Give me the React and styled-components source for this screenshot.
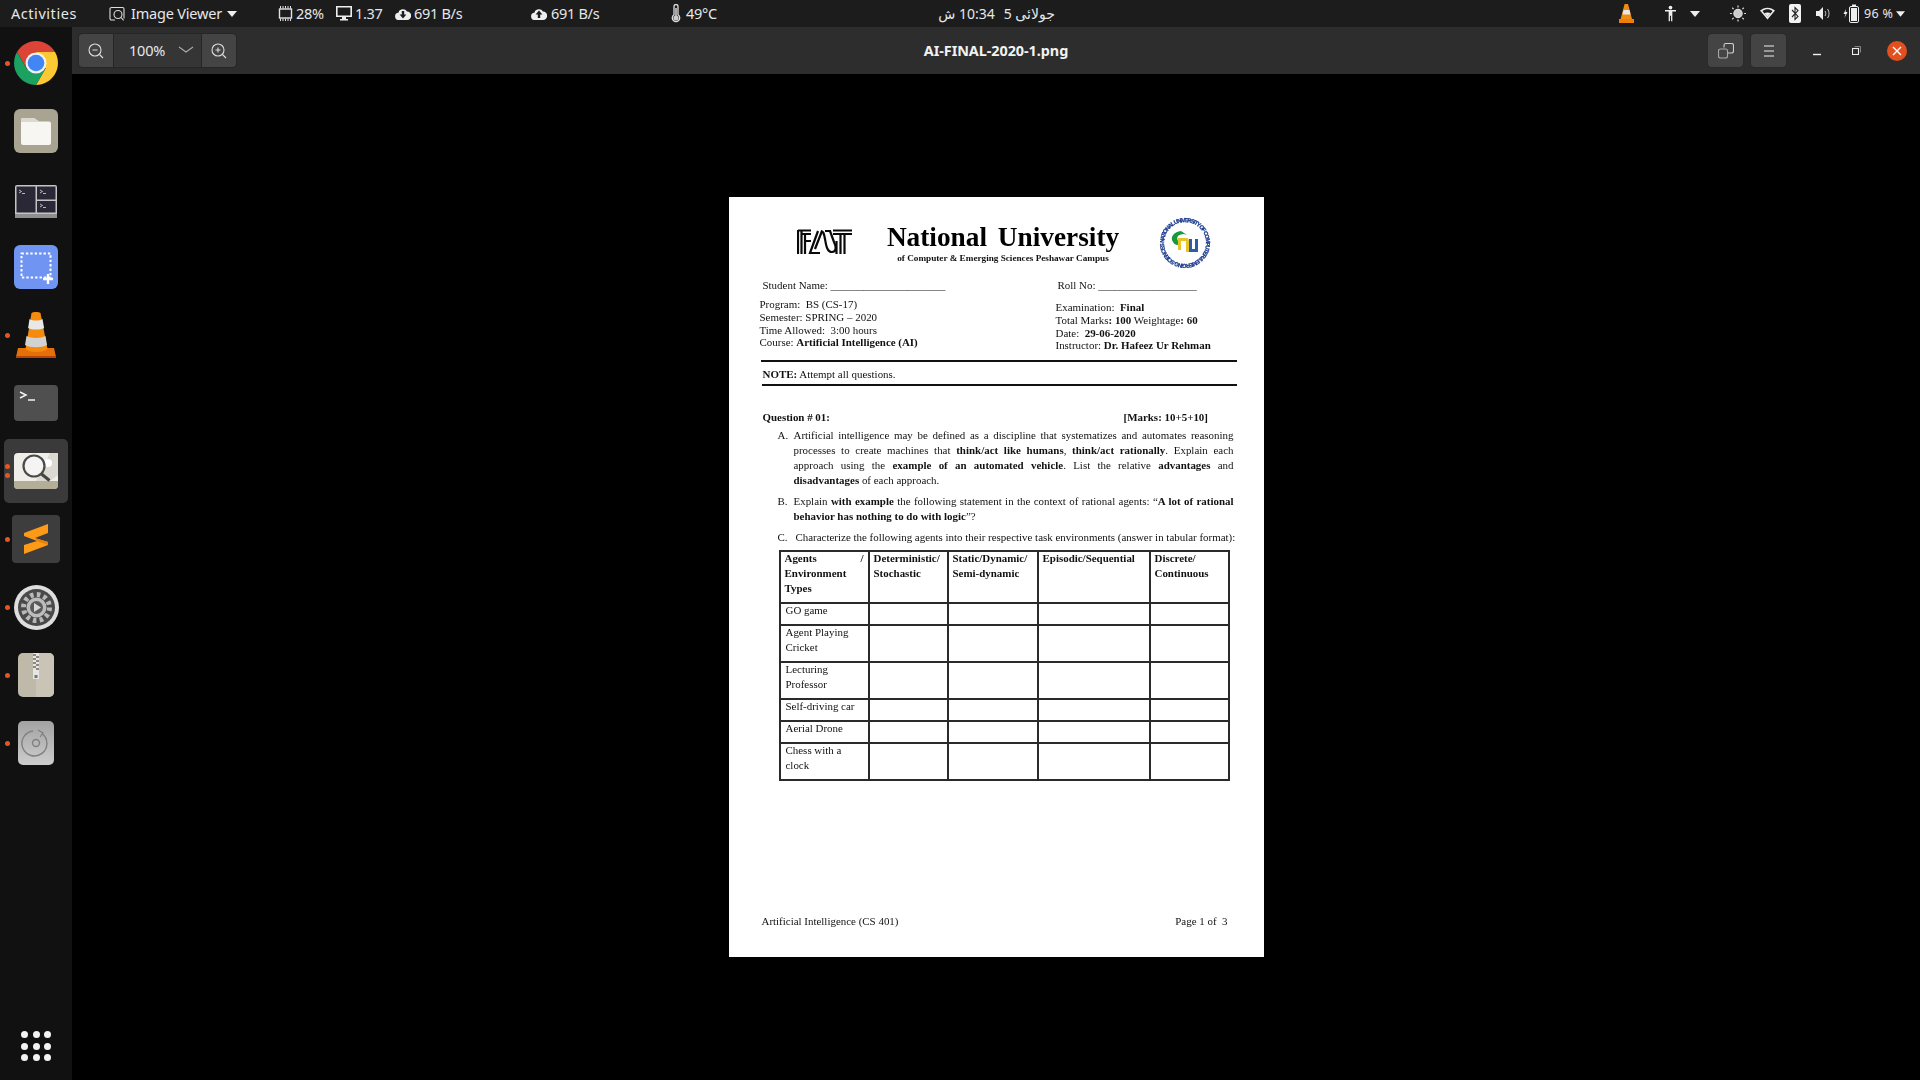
import React from "react";
import styled, { createGlobalStyle } from "styled-components";

const Global = createGlobalStyle`
  html, body { margin: 0; padding: 0; background: #000; }
  #root { width: 1920px; height: 1080px; overflow: hidden; }
`;
const Screen = styled.div`
  width: 1920px; height: 1080px; display: flex; flex-direction: column; background: #000;
  font-family: "Noto Sans", sans-serif; color: #e6e6e6;
`;
const TopBar = styled.header`
  height: 27px; flex: none; display: flex; align-items: center; background: #1c1c1c; font-size: 14px;
`;
const Cell = styled.div`
  flex: none; width: ${p => p.$w}px; margin-left: ${p => p.$ml}px; display: flex; align-items: center; justify-content: center;
  white-space: nowrap; color: ${p => p.$c || "#e4e8ea"};
`;
const StatusText = styled(Cell)`justify-content: flex-start; letter-spacing: ${p => p.$ls ?? -0.3}px; font-size: ${p => p.$fs || 14.5}px; padding-bottom: 1px;`;
const Clock = styled(Cell)`direction: rtl; font-family: "Noto Sans", "DejaVu Sans", sans-serif; font-size: 14px; gap: 9px; padding-bottom: 1px;`;
const Body = styled.div`flex: 1; display: flex; min-height: 0;`;
const Dock = styled.nav`
  width: 72px; flex: none; background: #111112; display: flex; flex-direction: column; padding-top: 2px; box-sizing: border-box;
`;
const Slot = styled.div`
  height: 68px; flex: none; position: relative; display: flex; align-items: center; justify-content: center; box-sizing: border-box;
  padding-top: ${p => p.$pt || 0}px;
`;
const ActiveBox = styled.div`
  width: 64px; height: 64px; border-radius: 5px; background: #3a3a3a; display: flex; align-items: center; justify-content: center;
`;
const Dot = styled.span`
  position: absolute; left: 5px; top: ${p => p.$top}px; width: 5px; height: 5px; border-radius: 50%; background: #e95420;
`;
const AppsGrid = styled.div`
  margin-top: auto; margin-bottom: 19px; align-self: center; display: grid; grid-template-columns: repeat(3, 7px); gap: 4.5px;
  & > i { width: 7px; height: 7px; border-radius: 50%; background: #f4f4f4; display: block; }
`;
const Main = styled.main`flex: 1; display: flex; flex-direction: column; min-width: 0;`;
const Header = styled.div`
  height: 47px; flex: none; display: grid; grid-template-columns: 1fr auto 1fr; align-items: center; background: #2d2d2d;
`;
const ToolGroup = styled.div`
  display: flex; height: 33px; margin-left: 7px; width: 157px; border-radius: 4px; overflow: hidden; box-shadow: 0 0 0 1px #262626;
`;
const ToolBtn = styled.div`
  width: 34px; flex: none; background: #444; display: flex; align-items: center; justify-content: center;
`;
const ZoomBox = styled.div`
  flex: 1; background: #353535; display: flex; align-items: center; border-left: 1px solid #262626; border-right: 1px solid #262626;
  padding: 0 0 1px 15px; gap: 13px; font-size: 14.5px; color: #e8e8e8; letter-spacing: -.2px;
`;
const Title = styled.div`font-weight: 700; font-size: 14.4px; color: #f2f2f2; letter-spacing: -.05px; padding-bottom: 1px;`;
const WinControls = styled.div`display: flex; align-items: center; justify-content: flex-end; padding-right: 13px;`;
const IconBtn = styled.div`
  width: 35px; height: 33px; border-radius: 4px; background: #444; margin-left: ${p => p.$ml}px; display: flex; align-items: center; justify-content: center; box-shadow: 0 0 0 1px #2a2a2a;
`;
const WinBtn = styled.div`width: ${p => p.$w}px; margin-left: ${p => p.$ml}px; display: flex; justify-content: center; align-items: center;`;
const CloseBtn = styled.div`
  width: 20px; height: 20px; border-radius: 50%; background: #e2501f; margin-left: ${p => p.$ml}px; display: flex; align-items: center; justify-content: center;
`;
const Viewer = styled.div`flex: 1; background: #000; display: flex; align-items: center; justify-content: center;`;
const Page = styled.article`
  width: 535px; height: 760px; flex: none; background: #fff; color: #111; box-sizing: border-box; padding: 20px 27px 0 33px;
  font-family: "Liberation Serif", serif; font-size: 10.95px; filter: blur(.3px);
`;
const Masthead = styled.div`display: flex; padding-left: 35px; height: 52px;`;
const MastLogo = styled.div`width: 54px; flex: none; padding-top: 12px;`;
const MastTitle = styled.div`width: 231px; margin-left: 37px; flex: none; padding-top: 4px; display: flex; flex-direction: column; align-items: center;`;
const UniName = styled.div`font-size: 27.3px; line-height: 32px; font-weight: 700; white-space: nowrap; word-spacing: 4px; color: #000;`;
const UniSub = styled.div`font-size: 9.2px; line-height: 10px; font-weight: 700; white-space: nowrap;`;
const MastSeal = styled.div`margin-left: 40px; flex: none; width: 52px;`;
const NameRow = styled.div`display: flex; margin: 10px 0 0 1px; line-height: 12px; white-space: nowrap;`;
const NameCol = styled.div`width: 295px; flex: none;`;
const Details = styled.div`display: flex; margin: 7px 0 0 -2px; height: 54px;`;
const DetailCol = styled.div`
  width: ${p => p.$w}px; flex: none; padding-top: ${p => p.$top || 0}px; line-height: 12.8px; white-space: nowrap;
`;
const Rule = styled.hr`
  border: 0; height: 2px; background: #111; margin: ${p => p.$mt}px 0 0 ${p => p.$ml || 0}px;
`;
const Note = styled.div`margin: 6px 0 0 1px; line-height: 12px;`;
const QuestionRow = styled.div`display: flex; margin: 25px 0 0 1px; line-height: 12px; font-weight: 700;`;
const QuestionTitle = styled.div`width: 361px; flex: none;`;
const Item = styled.div`display: flex; margin: ${p => p.$mt}px 0 0 16px; line-height: 15px;`;
const Marker = styled.div`width: ${p => p.$w || 16}px; flex: none;`;
const ItemBody = styled.div`width: ${p => p.$w || 440}px; flex: none;`;
const Line = styled.div`
  white-space: ${p => p.$last ? "nowrap" : "normal"};
  text-align: ${p => p.$last ? "left" : "justify"};
  text-align-last: ${p => p.$last ? "left" : "justify"};
  height: 15px;
`;
const Grid = styled.table`
  margin: 5px 0 0 17px; width: 449px; table-layout: fixed; border-collapse: collapse; line-height: 15px;
`;
const Th = styled.th`
  border: 2px solid #2a2a2a; padding: 0 4px; vertical-align: top; text-align: left; font-weight: 700; box-sizing: border-box;
`;
const Td = styled.td`
  border: 2px solid #2a2a2a; padding: 0 5px; vertical-align: top; box-sizing: border-box; font-weight: 400;
`;
const CellText = styled.div`margin-top: -1px;`;
const Row = styled.tr`height: ${p => p.$h}px;`;
const Footer = styled.footer`display: flex; justify-content: space-between; width: 466px; margin: 134px 0 0 0; line-height: 12px;`;

const CpuIcon = () => <svg width="15" height="15" viewBox="0 0 15 15" fill="none" stroke="#dfe3e5"><rect x="1.5" y="3" width="12" height="9" strokeWidth="1.4" /><path d="M2.5 0v2.5M5 0v2.5M7.5 0v2.5M10 0v2.5M12.5 0v2.5M2.5 12.5V15M5 12.5V15M7.5 12.5V15M10 12.5V15M12.5 12.5V15" /></svg>;
const Monitor = () => <svg width="16" height="15" viewBox="0 0 16 15" fill="#eee"><path d="M0 0h16v11H10v2h2v1.5H4V13h2v-2H0zM1.6 1.6v7.8h12.8V1.6z" /></svg>;
const Cloud = ({ up }) => <svg width="16" height="12" viewBox="0 0 16 12"><path fill="#eee" d="M4 12a3.6 3.6 0 0 1-.6-7.2A4.7 4.7 0 0 1 12 3.6 4.2 4.2 0 0 1 12 12z" /><path fill="#1c1c1c" d={up ? "M8 2.6l3.4 3.8H9.2V10H6.8V6.4H4.6z" : "M8 10.4l3.4-3.8H9.2V3H6.8v3.6H4.6z"} /></svg>;
const Thermo = () => <svg width="10" height="19" viewBox="0 0 10 19" fill="none"><path d="M3 2.5a2 2 0 0 1 4 0v8.3a3.7 3.7 0 1 1-4 0z" stroke="#ddd" strokeWidth="1.3" /><circle cx="5" cy="14" r="2.6" fill="#ccc" /><path d="M5 4v9" stroke="#ccc" strokeWidth="1.6" /></svg>;
const Caret = () => <svg width="10" height="6" viewBox="0 0 10 6"><path d="M0 0h10L5 6z" fill="#eee" /></svg>;
const AppGlyph = () => <svg width="16" height="16" viewBox="0 0 16 16" fill="none" stroke="#ddd" strokeWidth="1.1"><path d="M6 14H2.5A1.5 1.5 0 0 1 1 12.5V3a1.5 1.5 0 0 1 1.5-1.5h11A1.5 1.5 0 0 1 15 3v9.5" /><circle cx="9" cy="8.5" r="4" /><path d="M12 11.5l2.6 2.8" /></svg>;
const VlcTray = () => <svg width="15" height="19" viewBox="0 0 15 19"><path d="M5.6 0h3.4l4 15H1.6z" fill="#f08a12" /><path d="M4.5 6h6l1 4.5h-8z" fill="#e8e8e8" /><path d="M0 15h15v4H0z" fill="#ef7d0a" /></svg>;
const Person = () => <svg width="12" height="17" viewBox="0 0 12 17" fill="#eee"><circle cx="6" cy="2" r="2" /><path d="M0 4.8h12v1.6H8V17H6.6v-6H5.4v6H4V6.4H0z" /></svg>;
const Sun = () => <svg width="17" height="17" viewBox="0 0 17 17" fill="none" stroke="#ddd" strokeWidth="1.3"><circle cx="8.5" cy="8.5" r="4.4" fill="#ccc" /><path d="M8.5 0v2M8.5 15v2M0 8.5h2M15 8.5h2M2.4 2.4l1.4 1.4M13.2 13.2l1.4 1.4M2.4 14.6l1.4-1.4M13.2 3.8l1.4-1.4" /></svg>;
const Wifi = () => <svg width="16" height="13" viewBox="0 0 16 13"><path d="M0 3.4C4.5-.8 11.5-.8 16 3.4L8 13z" fill="#eee" /><path d="M2.6 3.8C5.8 1.4 10.2 1.4 13.4 3.8L8 10.2z" fill="#1c1c1c" /><path d="M4.6 6.2c2-1.2 4.8-1.2 6.8 0L8 10.2z" fill="#eee" /></svg>;
const Bt = () => <svg width="12" height="19" viewBox="0 0 12 19"><rect width="12" height="19" rx="2" fill="#f2f2f2" /><path d="M3 6l6 6.4-3 3V3.6l3 3L3 13" fill="none" stroke="#222" strokeWidth="1.1" /></svg>;
const Vol = () => <svg width="15" height="15" viewBox="0 0 15 15" fill="none"><path d="M0 5h3l4-4v13l-4-4H0z" fill="#eee" /><path d="M9 5c1 1.5 1 3.5 0 5M11.5 3c2 2.6 2 6.4 0 9" stroke="#ccc" /></svg>;
const Battery = () => <svg width="16" height="19" viewBox="0 0 16 19"><path d="M3 5L.5 10H2.5L1.5 14l3-6H2.6z" fill="#eee" /><rect x="6.5" y="2.5" width="9" height="16" rx="1.5" fill="none" stroke="#eee" /><rect x="8" y="4" width="6" height="13" fill="#eee" /><rect x="9" y="0.5" width="4" height="2" fill="#eee" /></svg>;
const ZoomGlass = ({ plus }) => <svg width="16" height="16" viewBox="0 0 16 16" fill="none" stroke="#ddd" strokeWidth="1.1"><circle cx="7" cy="7" r="6" /><path d="M11.5 11.5L15 15M4.5 7h5" />{plus && <path d="M7 4.5v5" />}</svg>;
const Chevron = () => <svg width="16" height="8" viewBox="0 0 16 8" fill="none" stroke="#aaa" strokeWidth="1.1"><path d="M1 1l7 5 7-5" /></svg>;
const Restore = () => <svg width="16" height="16" viewBox="0 0 16 16" fill="none" stroke="#cfcfcf" strokeWidth="1.1"><path d="M6 4.5V2.5a2 2 0 0 1 2-2h5.5a2 2 0 0 1 2 2V8a2 2 0 0 1-2 2H10" /><rect x=".5" y="6" width="9" height="9" rx="2" stroke="#aaa" /></svg>;
const Burger = () => <svg width="12" height="12" viewBox="0 0 12 12" stroke="#eee" strokeWidth="1.2"><path d="M1 1h10M1 6h10M1 11h10" /></svg>;
const MinGlyph = () => <svg width="10" height="10" viewBox="0 0 10 10"><path d="M1 8.5h8" stroke="#eee" strokeWidth="1.4" /></svg>;
const MaxGlyph = () => <svg width="9" height="9" viewBox="0 0 9 9" fill="none" stroke="#eee"><rect x=".5" y="2.5" width="6" height="6" strokeWidth="1.1" /><path d="M2.5 .5h6v6" stroke="#999" strokeWidth=".8" /></svg>;
const CloseGlyph = () => <svg width="10" height="10" viewBox="0 0 10 10" stroke="#fff" strokeWidth="1.4"><path d="M1 1l8 8M9 1l-8 8" /></svg>;

const Chrome = () => <svg width="44" height="44" viewBox="0 0 44 44"><path d="M3 11A22 22 0 0 1 41 11H22L12.5 27.5z" fill="#db4437" /><path d="M41 11A22 22 0 0 1 22 44L31.5 27.5 22 11z" fill="#fcc934" /><path d="M22 44A22 22 0 0 1 3 11L12.5 27.5H31.5z" fill="#1ba261" /><circle cx="22" cy="22" r="10.5" fill="#f1f1f1" /><circle cx="22" cy="22" r="8.3" fill="#4285f4" /></svg>;
const Files = () => <svg width="44" height="44" viewBox="0 0 44 44"><rect width="44" height="44" rx="6" fill="#a9a392" /><path d="M7 11a2 2 0 0 1 2-2h11l5 3.5h10a2 2 0 0 1 2 2V34a2 2 0 0 1-2 2H9a2 2 0 0 1-2-2z" fill="#f7f6f3" /><path d="M7 11a2 2 0 0 1 2-2h11l5 4H7z" fill="#dbd8ce" /></svg>;
const Tiling = () => <svg width="42" height="33" viewBox="0 0 42 33"><rect width="42" height="33" rx="2" fill="#c4c4c4" /><rect y="29" width="42" height="4" fill="#8f8f8f" /><rect x="1.5" y="1.5" width="19" height="26" fill="#2a2837" /><rect x="22" y="1.5" width="18.5" height="13" fill="#2a2837" /><rect x="22" y="16" width="18.5" height="11.5" fill="#2a2837" /><path d="M4 5l2.5 1.5L4 8M7 8.5h3M25 5l2.5 1.5L25 8M28 8.5h3M25 19l2.5 1.5L25 22M28 22.5h3" stroke="#ddd" strokeWidth=".8" fill="none" /></svg>;
const Shot = () => <svg width="44" height="44" viewBox="0 0 44 44"><rect width="44" height="44" rx="6" fill="#6f94f2" /><rect x="7.5" y="8.5" width="29" height="24" fill="none" stroke="#fff" strokeWidth="2" strokeDasharray="2.4 2" /><path d="M29 34h10M34 29v10" stroke="#fff" strokeWidth="2.4" /></svg>;
const Vlc = () => <svg width="40" height="46" viewBox="0 0 40 46"><path d="M2 36h36l2 9H0z" fill="#e67008" /><path d="M0 44h40v2H0z" fill="#b5430a" /><path d="M15.5 1c2-1.3 7-1.3 9 0l7 36c-4 4-18 4-22 0z" fill="#f58a0c" /><path d="M13.5 7c3 2 10 2 13 0l1.6 9c-4 2-12 2-16 0z" fill="#e8e8e8" /><path d="M10.5 24c4 2.5 15 2.5 19 0l1.5 9c-5 3-17 3-22 0z" fill="#d2d2d2" /></svg>;
const Terminal = () => <svg width="44" height="36" viewBox="0 0 44 36"><rect width="44" height="36" rx="4" fill="#4f4f4f" /><path d="M6 7l6 3-6 3M14 15h7" fill="none" stroke="#f2f2f2" strokeWidth="1.5" /></svg>;
const ImgViewer = () => <svg width="44" height="36" viewBox="0 0 44 36"><rect width="44" height="36" rx="4" fill="#efeee9" /><path d="M0 28h44v4a4 4 0 0 1-4 4H4a4 4 0 0 1-4-4z" fill="#b4ae98" /><path d="M22 28L36 0h8v22l-8 6z" fill="#dcdad0" /><circle cx="34" cy="10" r="4" fill="#fff" /><circle cx="20" cy="13" r="10.5" fill="#f6f6f6" fillOpacity=".7" stroke="#4a4a4a" strokeWidth="2.2" /><path d="M27.5 21l8 6.5" stroke="#444" strokeWidth="3" /></svg>;
const Sublime = () => <svg width="48" height="48" viewBox="0 0 48 48"><rect width="48" height="48" rx="4" fill="#3d3d3d" /><path d="M12 18L36 9v9l-13 5 13 4v3L12 39v-9l13-4-13-5z" fill="#ff9a17" /><path d="M23 23l13 4v3l-11-4z" fill="#e5830f" /></svg>;
const Gear = () => <svg width="45" height="45" viewBox="0 0 45 45"><circle cx="22.5" cy="22.5" r="22.5" fill="#dedede" /><circle cx="22.5" cy="22.5" r="18.5" fill="#4a4a4a" /><circle cx="22.5" cy="22.5" r="13" fill="none" stroke="#b9b9b9" strokeWidth="5" strokeDasharray="3.5 3.3" /><circle cx="22.5" cy="22.5" r="10" fill="#bcbcbc" /><circle cx="22.5" cy="22.5" r="6.5" fill="#5a5a5a" /><path d="M20 18l7 4.5-7 4.5z" fill="#d8d8d8" /></svg>;
const Zip = () => <svg width="36" height="44" viewBox="0 0 36 44"><rect width="36" height="44" rx="5" fill="#bfb9a9" /><path d="M18 0h13a5 5 0 0 1 5 5v34a5 5 0 0 1-5 5H18z" fill="#c9c4b6" /><rect x="15" y="0" width="6" height="26" fill="#e6e6e6" /><path d="M15 1h3v2h-3zM18 3h3v2h-3zM15 5h3v2h-3zM18 7h3v2h-3zM15 9h3v2h-3zM18 11h3v2h-3zM15 13h3v2h-3zM18 15h3v2h-3z" fill="#8d897e" /><rect x="16.5" y="22" width="3" height="3" fill="#777" /></svg>;
const Disc = () => <svg width="36" height="44" viewBox="0 0 36 44"><defs><linearGradient id="dg" x1="0" y1="0" x2="0" y2="1"><stop offset="0" stopColor="#a2a2a2" /><stop offset="1" stopColor="#cdcdcd" /></linearGradient></defs><rect width="36" height="44" rx="5" fill="url(#dg)" /><path d="M24 12.5A12.5 12.5 0 1 1 15 10" fill="none" stroke="#808080" strokeWidth="1.4" /><path d="M20 9l5 3-3 4" fill="none" stroke="#808080" strokeWidth="1.2" /><circle cx="18" cy="22" r="3.5" fill="none" stroke="#808080" strokeWidth="1.4" /></svg>;

const FastLogo = () => <svg width="55" height="26" viewBox="0 0 55 26" fill="none" stroke="#0a0a0a" strokeWidth="2.2">
  <path d="M1 1v24M4.5 1v24M8 5v20M1 1.500h13M4.500 5h9.500M8 12h6" />
  <path d="M21 2L13 24h10M25 2L18 20" />
  <path d="M24 2c2.500 0 3 3 4 8 1 6 2 13 7 13s4-6 2-10l-4-11M28 2h6" />
  <path d="M36 1.500h19M36 5h19M43.500 5v20M47.500 5v20M39.500 12v13" />
</svg>;
const Seal = () => <svg width="52" height="52" viewBox="0 0 52 52">
  <defs><path id="ring" d="M26 26m-21 0a21 21 0 1 1 42 0a21 21 0 1 1-42 0" /></defs>
  <text fontFamily="Liberation Sans, sans-serif" fontSize="5.8" fontWeight="700" fill="#17388a" stroke="#17388a" strokeWidth=".25" textLength="131"><textPath href="#ring">NATIONAL UNIVERSITY OF COMPUTER &amp; EMERGING SCIENCES</textPath></text>
  <path d="M22 14c-7 1-10 5-9 9 1 3 3 5 6 5v-4c-1-2-1-4 0-5 1-1 3-2 6-2l3 1z" fill="#169a3c" />
  <path d="M19 21h8c2 0 3 1 3 3v11h-3V24h-5v9h-3z" fill="#e9c428" />
  <path d="M30 22h3v10h3V22h3v13H30z" fill="#2a5fa8" />
</svg>;

const rows = [
  [22, ["GO game"]], [37, ["Agent Playing", "Cricket"]], [37, ["Lecturing", "Professor"]],
  [22, ["Self-driving car"]], [22, ["Aerial Drone"]], [37, ["Chess with a", "clock"]],
];

export default function App() {
  return (
    <Screen>
      <Global />
      <TopBar>
        <StatusText $ml={11} $w={64} $ls={0.55}>Activities</StatusText>
        <Cell $ml={34} $w={16}><AppGlyph /></Cell>
        <StatusText $ml={6} $w={91} $ls={-0.2}>Image Viewer</StatusText>
        <Cell $ml={5} $w={10}><Caret /></Cell>
        <Cell $ml={41} $w={15}><CpuIcon /></Cell>
        <StatusText $ml={3} $w={29}>28%</StatusText>
        <Cell $ml={11} $w={16}><Monitor /></Cell>
        <StatusText $ml={3} $w={29}>1.37</StatusText>
        <Cell $ml={10} $w={17}><Cloud /></Cell>
        <StatusText $ml={3} $w={48}>691 B/s</StatusText>
        <Cell $ml={69} $w={16}><Cloud up /></Cell>
        <StatusText $ml={4} $w={48}>691 B/s</StatusText>
        <Cell $ml={72} $w={10}><Thermo /></Cell>
        <StatusText $ml={5} $w={29}>49°C</StatusText>
        <Clock $ml={222} $w={119}><span>جولائی 5</span><span>10:34 ش</span></Clock>
        <Cell $ml={563} $w={15}><VlcTray /></Cell>
        <Cell $ml={31} $w={11}><Person /></Cell>
        <Cell $ml={14} $w={10}><Caret /></Cell>
        <Cell $ml={30} $w={16}><Sun /></Cell>
        <Cell $ml={14} $w={15}><Wifi /></Cell>
        <Cell $ml={14} $w={12}><Bt /></Cell>
        <Cell $ml={15} $w={15}><Vol /></Cell>
        <Cell $ml={12} $w={16}><Battery /></Cell>
        <StatusText $ml={5} $w={29} $fs={12.5} $ls={.3}>96 %</StatusText>
        <Cell $ml={3} $w={9}><Caret /></Cell>
      </TopBar>
      <Body>
        <Dock>
          <Slot><Dot $top={32} /><Chrome /></Slot>
          <Slot><Files /></Slot>
          <Slot $pt={4}><Tiling /></Slot>
          <Slot><Shot /></Slot>
          <Slot><Dot $top={32} /><Vlc /></Slot>
          <Slot><Terminal /></Slot>
          <Slot><Dot $top={27} /><Dot $top={36} /><ActiveBox><ImgViewer /></ActiveBox></Slot>
          <Slot><Dot $top={32} /><Sublime /></Slot>
          <Slot><Dot $top={32} /><Gear /></Slot>
          <Slot><Dot $top={32} /><Zip /></Slot>
          <Slot><Dot $top={32} /><Disc /></Slot>
          <AppsGrid>{Array.from({ length: 9 }, (_, i) => <i key={i} />)}</AppsGrid>
        </Dock>
        <Main>
          <Header>
            <ToolGroup>
              <ToolBtn><ZoomGlass /></ToolBtn>
              <ZoomBox>100%<Chevron /></ZoomBox>
              <ToolBtn><ZoomGlass plus /></ToolBtn>
            </ToolGroup>
            <Title>AI-FINAL-2020-1.png</Title>
            <WinControls>
              <IconBtn $ml={0}><Restore /></IconBtn>
              <IconBtn $ml={8}><Burger /></IconBtn>
              <WinBtn $ml={26} $w={10}><MinGlyph /></WinBtn>
              <WinBtn $ml={30} $w={9}><MaxGlyph /></WinBtn>
              <CloseBtn $ml={26}><CloseGlyph /></CloseBtn>
            </WinControls>
          </Header>
          <Viewer>
            <Page>
              <Masthead>
                <MastLogo><FastLogo /></MastLogo>
                <MastTitle>
                  <UniName>National University</UniName>
                  <UniSub>of Computer &amp; Emerging Sciences Peshawar Campus</UniSub>
                </MastTitle>
                <MastSeal><Seal /></MastSeal>
              </Masthead>
              <NameRow>
                <NameCol>Student Name: _____________________</NameCol>
                <div>Roll No: __________________</div>
              </NameRow>
              <Details>
                <DetailCol $w={296}>
                  <div>Program:&nbsp; BS (CS-17)</div>
                  <div>Semester: SPRING – 2020</div>
                  <div>Time Allowed:&nbsp; 3:00 hours</div>
                  <div>Course: <b>Artificial Intelligence (AI)</b></div>
                </DetailCol>
                <DetailCol $w={180} $top={3}>
                  <div>Examination:&nbsp; <b>Final</b></div>
                  <div>Total Marks<b>: 100</b> Weightage<b>: 60</b></div>
                  <div>Date:&nbsp; <b>29-06-2020</b></div>
                  <div>Instructor: <b>Dr. Hafeez Ur Rehman</b></div>
                </DetailCol>
              </Details>
              <Rule $mt={8} $ml={-1} />
              <Note><b>NOTE:</b> Attempt all questions.</Note>
              <Rule $mt={4} />
              <QuestionRow><QuestionTitle>Question # 01:</QuestionTitle><span>[Marks: 10+5+10]</span></QuestionRow>
              <Item $mt={5}>
                <Marker>A.</Marker>
                <ItemBody>
                  <Line>Artificial intelligence may be defined as a discipline that systematizes and automates reasoning</Line>
                  <Line>processes to create machines that <b>think/act like humans</b>, <b>think/act rationally</b>. Explain each</Line>
                  <Line>approach using the <b>example of an automated vehicle</b>. List the relative <b>advantages</b> and</Line>
                  <Line $last><b>disadvantages</b> of each approach.</Line>
                </ItemBody>
              </Item>
              <Item $mt={6}>
                <Marker>B.</Marker>
                <ItemBody>
                  <Line>Explain <b>with example</b> the following statement in the context of rational agents: “<b>A lot of rational</b></Line>
                  <Line $last><b>behavior has nothing to do with logic</b>”?</Line>
                </ItemBody>
              </Item>
              <Item $mt={6}>
                <Marker $w={18}>C.</Marker>
                <ItemBody $w={438}>
                  <Line $last>Characterize the following agents into their respective task environments (answer in tabular format):</Line>
                </ItemBody>
              </Item>
              <Grid>
                <colgroup>
                  <col style={{ width: 89 }} /><col style={{ width: 79 }} /><col style={{ width: 90 }} /><col style={{ width: 112 }} /><col style={{ width: 79 }} />
                </colgroup>
                <thead>
                  <Row $h={52}>
                    <Th><CellText><Line>Agents /</Line>Environment<br />Types</CellText></Th>
                    <Th><CellText>Deterministic/<br />Stochastic</CellText></Th>
                    <Th><CellText>Static/Dynamic/<br />Semi-dynamic</CellText></Th>
                    <Th><CellText>Episodic/Sequential</CellText></Th>
                    <Th><CellText>Discrete/<br />Continuous</CellText></Th>
                  </Row>
                </thead>
                <tbody>
                  {rows.map(([h, label]) => (
                    <Row $h={h} key={label[0]}>
                      <Td><CellText>{label.map(l => <div key={l}>{l}</div>)}</CellText></Td>
                      <Td /><Td /><Td /><Td />
                    </Row>
                  ))}
                </tbody>
              </Grid>
              <Footer><span>Artificial Intelligence (CS 401)</span><span>Page 1 of&nbsp; 3</span></Footer>
            </Page>
          </Viewer>
        </Main>
      </Body>
    </Screen>
  );
}
